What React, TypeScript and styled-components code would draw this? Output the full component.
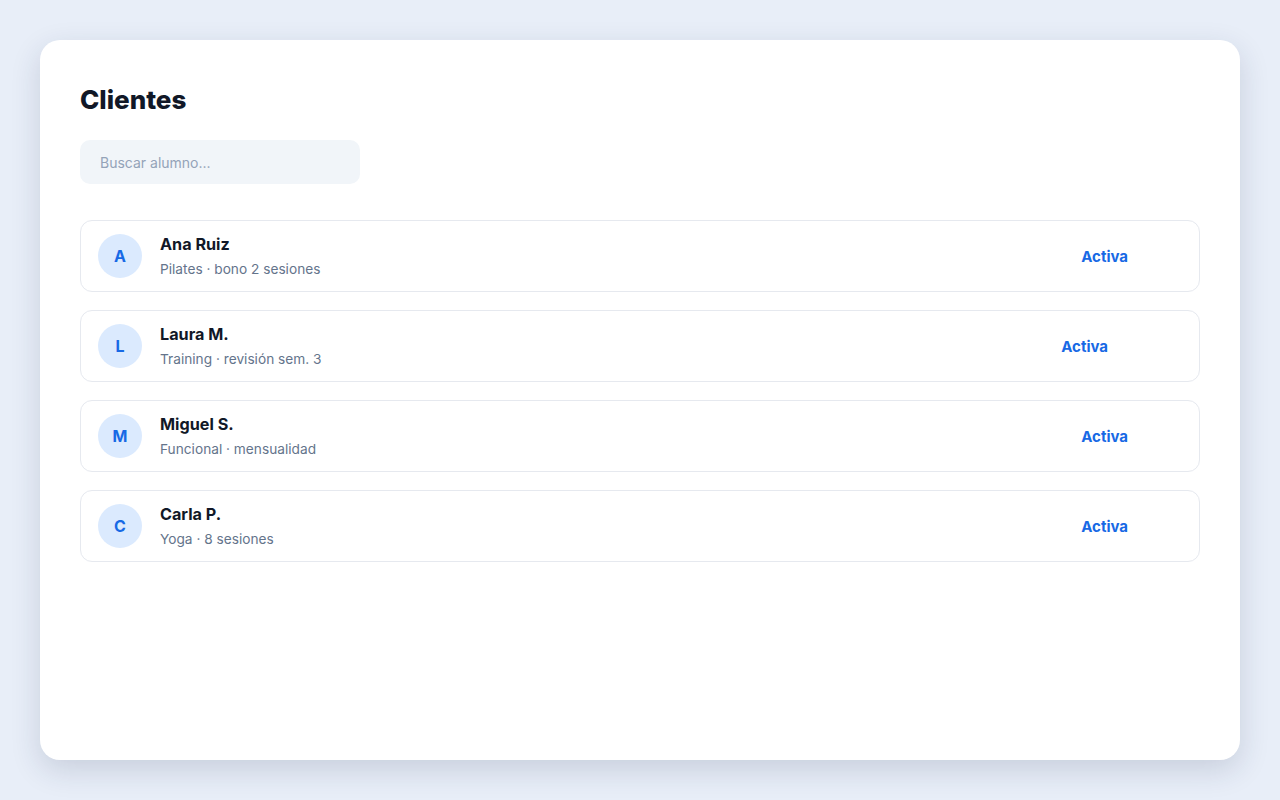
import styled, { createGlobalStyle } from "styled-components"

const Global = createGlobalStyle`
  * { box-sizing: border-box; }
  body {
    margin: 0;
    background: #e8eef8;
    font-family: Inter, "Noto Sans", sans-serif;
    color: #0f172a;
  }
`

const Page = styled.div`
  padding: 40px;
  height: 800px;
`

const Card = styled.main`
  background: #fff;
  border-radius: 20px;
  height: 720px;
  padding: 40px;
  box-shadow: 0 10px 30px rgba(30, 41, 80, 0.16);
`

const Title = styled.h1`
  margin: 0;
  font-size: 26px;
  line-height: 32px;
  font-weight: 800;
  color: #111827;
  padding-top: 4px;
`

const Search = styled.input`
  display: block;
  margin-top: 24px;
  width: 280px;
  height: 44px;
  border: none;
  outline: none;
  border-radius: 10px;
  background: #f1f5f9;
  padding: 0 20px;
  font-family: inherit;
  font-size: 14px;
  color: #0f172a;
  &::placeholder { color: #94a3b8; }
`

const List = styled.ul`
  list-style: none;
  margin: 36px 0 0;
  padding: 0;
  display: flex;
  flex-direction: column;
  gap: 18px;
`

const Row = styled.li`
  display: flex;
  align-items: center;
  gap: 18px;
  height: 72px;
  padding: 0 17px;
  border: 1px solid #e6e9ef;
  border-radius: 12px;
`

const Avatar = styled.div`
  width: 44px;
  height: 44px;
  border-radius: 50%;
  background: #dbeafe;
  color: #1769e5;
  font-weight: 700;
  font-size: 16px;
  display: grid;
  place-items: center;
`

const Info = styled.div`
  flex: 1;
  display: flex;
  flex-direction: column;
  gap: 7px;
`

const Name = styled.div`
  font-size: 16.2px;
  line-height: 20px;
  font-weight: 700;
  color: #111827;
`

const Meta = styled.div`
  font-size: 13.7px;
  line-height: 17px;
  color: #64748b;
`

const Status = styled.span<{ $shift?: number }>`
  font-size: 15px;
  font-weight: 700;
  color: #1769e5;
  margin-right: ${p => 54 + (p.$shift ?? 0)}px;
`

const clients = [
  { name: "Ana Ruiz", meta: "Pilates · bono 2 sesiones", shift: 0 },
  { name: "Laura M.", meta: "Training · revisión sem. 3", shift: 20 },
  { name: "Miguel S.", meta: "Funcional · mensualidad", shift: 0 },
  { name: "Carla P.", meta: "Yoga · 8 sesiones", shift: 0 },
]

export default function App() {
  return (
    <>
      <Global />
      <Page>
        <Card>
          <Title>Clientes</Title>
          <Search placeholder="Buscar alumno..." />
          <List>
            {clients.map(c => (
              <Row key={c.name}>
                <Avatar>{c.name[0]}</Avatar>
                <Info>
                  <Name>{c.name}</Name>
                  <Meta>{c.meta}</Meta>
                </Info>
                <Status $shift={c.shift}>Activa</Status>
              </Row>
            ))}
          </List>
        </Card>
      </Page>
    </>
  )
}
